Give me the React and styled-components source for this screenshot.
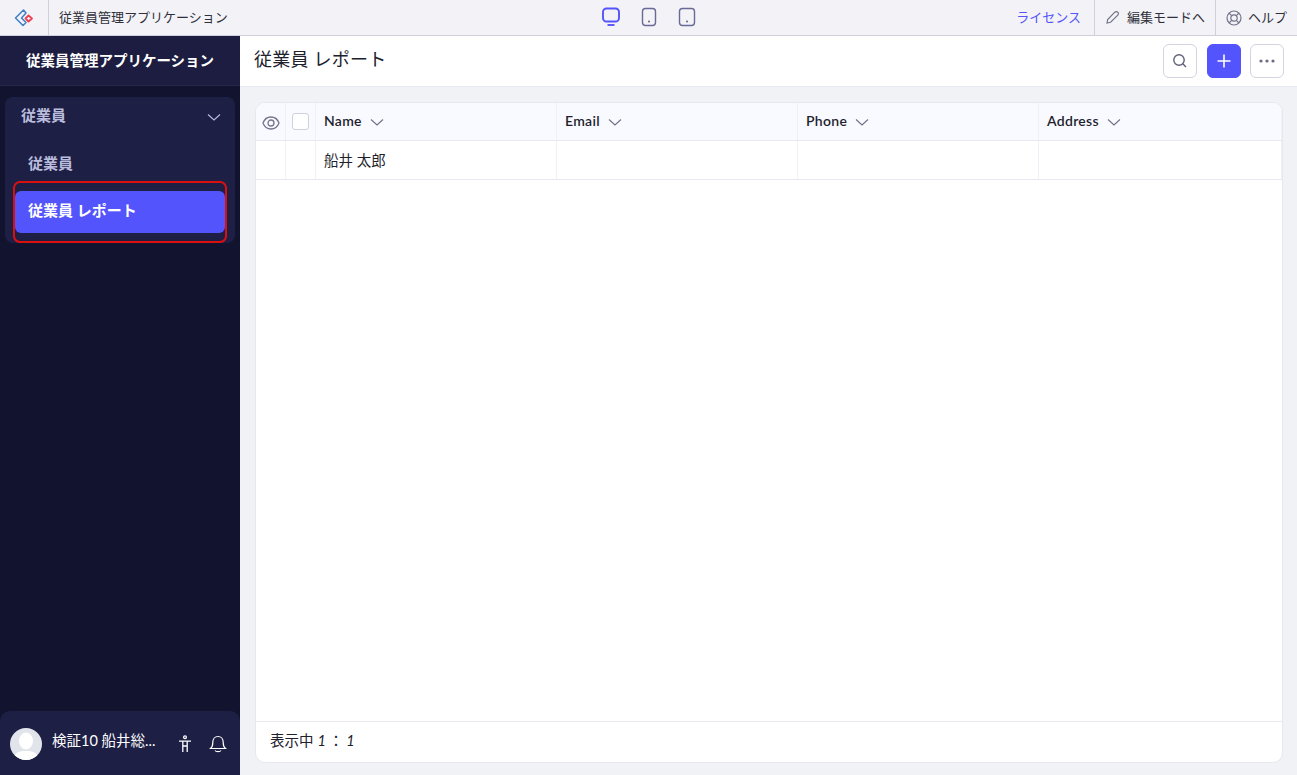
import React from 'react';
import styled, { createGlobalStyle } from 'styled-components';

const GlobalStyle = createGlobalStyle`
    html, body {
        margin: 0;
        height: 100%;
        overflow: hidden;
    }
    body {
        font-family: "Lato", "Noto Sans CJK JP", sans-serif;
        background-color: #f1f2f6;
    }
`;

const Page = styled.div`
    display: flex;
    flex-direction: column;
    width: 1297px;
    height: 775px;
`;

const TopBar = styled.header`
    display: flex;
    align-items: stretch;
    flex: none;
    position: relative;
    height: 35px;
    background-color: #f2f2f7;
    border-bottom: 1px solid #d0d0dc;
`;

const LogoCell = styled.div`
    display: flex;
    align-items: center;
    justify-content: center;
    width: 48px;
    border-right: 1px solid #d0d0dc;
`;

const AppName = styled.div`
    display: flex;
    align-items: center;
    padding: 0 0 3px 10px;
    font-size: 13px;
    color: #2f2f3a;
`;

const DeviceGroup = styled.div`
    position: absolute;
    left: 601px;
    top: 7px;
    display: flex;
    gap: 18px;
`;

const TopRight = styled.div`
    display: flex;
    margin-left: auto;
`;

const TopLink = styled.div`
    display: flex;
    align-items: center;
    gap: ${(p) => p.$gap || 7}px;
    padding: 0 ${(p) => p.$pad || 10}px;
    font-size: 13px;
    color: ${(p) => (p.$accent ? '#5454f8' : '#2f2f3a')};
    border-left: ${(p) => (p.$divider ? '1px solid #d0d0dc' : 'none')};
`;

const TopLabel = styled.span`
    padding-bottom: 3px;
`;

const Body = styled.div`
    display: flex;
    flex: 1;
    min-height: 0;
`;

const Sidebar = styled.aside`
    position: relative;
    display: flex;
    flex-direction: column;
    flex: none;
    width: 240px;
    background-color: #12132f;
`;

const Brand = styled.div`
    display: flex;
    align-items: center;
    justify-content: center;
    flex: none;
    height: 50px;
    padding-bottom: 3px;
    font-size: 14.5px;
    font-weight: 700;
    color: #fff;
    background-color: #1c1d40;
    border-bottom: 1px solid #25264a;
    box-sizing: border-box;
`;

const MenuGroup = styled.nav`
    display: flex;
    flex-direction: column;
    margin: 11px 5px 0;
    height: 146px;
    padding: 0 10px;
    background-color: #1e1f45;
    border-radius: 8px;
`;

const GroupHead = styled.div`
    display: flex;
    align-items: center;
    justify-content: space-between;
    height: 36px;
    padding: 0 4px 0 6px;
    font-size: 15px;
    font-weight: 700;
    color: #b9bcdc;
`;

const GroupLabel = styled.span`
    padding-bottom: 2px;
`;

const ChevronSlot = styled.span`
    display: flex;
    margin-top: 4px;
`;

const MenuItem = styled.div`
    display: flex;
    align-items: center;
    box-sizing: border-box;
    height: 42px;
    margin-top: ${(p) => p.$gap || 0}px;
    padding: 0 0 ${(p) => (p.$active ? 5 : 4)}px 13px;
    font-size: 15px;
    font-weight: 700;
    border-radius: 6px;
    color: ${(p) => (p.$active ? '#fff' : '#b9bcdc')};
    background-color: ${(p) => (p.$active ? '#5454fc' : 'transparent')};
`;

const Highlight = styled.div`
    position: absolute;
    left: 13px;
    top: 145px;
    width: 214px;
    height: 62px;
    box-sizing: border-box;
    border: 2px solid #dc0f0f;
    border-radius: 7px;
    pointer-events: none;
`;

const UserBar = styled.div`
    display: flex;
    align-items: center;
    flex: none;
    height: 64px;
    margin-top: auto;
    padding: 0 13px 0 10px;
    background-color: #1e1f45;
    border-radius: 10px 10px 0 0;
`;

const Avatar = styled.div`
    position: relative;
    overflow: hidden;
    flex: none;
    width: 32px;
    height: 32px;
    margin-top: 2px;
    border-radius: 50%;
    background-color: #e2e4ec;
`;

const UserName = styled.div`
    flex: 1;
    margin-left: 10px;
    padding-bottom: 8px;
    font-size: 14.5px;
    color: #fff;
    white-space: nowrap;
    overflow: hidden;
`;

const UserIcons = styled.div`
    display: flex;
    align-items: center;
    gap: 16px;
    margin-top: 2px;
`;

const Main = styled.main`
    display: flex;
    flex-direction: column;
    flex: 1;
    min-width: 0;
`;

const MainHead = styled.div`
    display: flex;
    align-items: center;
    justify-content: space-between;
    flex: none;
    box-sizing: border-box;
    height: 51px;
    padding: 0 13px 2px 14px;
    background-color: #fff;
    border-bottom: 1px solid #e8e9f0;
`;

const PageTitle = styled.h1`
    margin: 0 0 4px;
    font-size: 18px;
    font-weight: 400;
    letter-spacing: 0.25px;
    color: #20202c;
`;

const Actions = styled.div`
    display: flex;
    gap: 9px;
    margin-top: 1px;
`;

const IconButton = styled.button`
    display: flex;
    align-items: center;
    justify-content: center;
    box-sizing: border-box;
    width: 34px;
    height: 34px;
    padding: 0;
    margin-right: ${(p) => (p.$spaced ? 1 : 0)}px;
    border-radius: 6px;
    border: 1px solid ${(p) => (p.$primary ? '#5454fc' : '#d3d3e2')};
    background-color: ${(p) => (p.$primary ? '#5454fc' : '#fff')};
`;

const Content = styled.div`
    display: flex;
    flex: 1;
    min-height: 0;
    padding: 15px 14px 12px 15px;
`;

const Card = styled.section`
    display: flex;
    flex-direction: column;
    flex: 1;
    box-sizing: border-box;
    overflow: hidden;
    background-color: #fff;
    border: 1px solid #e7e8ef;
    border-radius: 10px;
`;

const Row = styled.div`
    display: grid;
    grid-template-columns: 30px 30px 241px 241px 241px 1fr;
    flex: none;
    box-sizing: border-box;
    height: ${(p) => p.$height}px;
    background-color: ${(p) => (p.$head ? '#f9faff' : '#fff')};
    border-bottom: 1px solid #e8e9f0;
`;

const Cell = styled.div`
    display: flex;
    align-items: center;
    justify-content: ${(p) => (p.$center ? 'center' : 'flex-start')};
    gap: 8px;
    padding-left: ${(p) => (p.$center ? 0 : 8)}px;
    font-size: ${(p) => (p.$head ? 14 : 14.5)}px;
    font-weight: ${(p) => (p.$head ? 600 : 400)};
    letter-spacing: ${(p) => (p.$head ? '0.3px' : '0')};
    color: #1f1f2e;
    border-right: 1px solid #f0f1f6;
`;

const CellText = styled.span`
    padding-bottom: 2px;
`;

const EyeSlot = styled.span`
    display: flex;
    margin-top: 2px;
`;

const Checkbox = styled.span`
    display: block;
    box-sizing: border-box;
    width: 17px;
    height: 17px;
    background-color: #fff;
    border: 1px solid #cfd0e0;
    border-radius: 3px;
`;

const Spacer = styled.div`
    flex: 1;
`;

const Footer = styled.div`
    display: flex;
    align-items: center;
    flex: none;
    box-sizing: border-box;
    height: 41px;
    padding: 0 0 5px 14px;
    font-size: 14.5px;
    color: #20202c;
    border-top: 1px solid #e8e9f0;
`;

const Count = styled.span`
    margin-left: 4px;
    font-style: italic;
    white-space: pre;
`;

const CountColon = styled.span`
    margin: 0 -0.5px;
    font-style: normal;
`;

const Chevron = ({ color = '#6f7086', size = 14 }) => (
    <svg width={size} height={size} viewBox="0 0 14 14" fill="none" stroke={color} strokeWidth="1.1">
        <path d="M1 4.5 L7 10 L13 4.5" />
    </svg>
);

const Logo = () => (
    <svg width="22" height="20" viewBox="0 0 22 20" fill="none">
        <path d="M10.5 2 L2.5 10 L10 17.5 L13 14.5 L8.5 10 L13 5 Z" stroke="#3f80c4" strokeWidth="1.5" strokeLinejoin="round" />
        <path d="M15.5 7.5 L19 10.5 L15.5 13.5 L12.5 10.5 Z" stroke="#ee4050" strokeWidth="1.8" strokeLinejoin="round" />
    </svg>
);

const Desktop = () => (
    <svg width="20" height="20" viewBox="0 0 20 20" fill="none" stroke="#5454fc">
        <rect x="2" y="1.5" width="16" height="13" rx="3.5" strokeWidth="1.9" />
        <path d="M6.5 18 H13.5" strokeWidth="1.9" />
    </svg>
);

const Handheld = ({ wide }) => {
    const x = wide ? 2.5 : 3.5;
    const w = wide ? 15 : 13;
    return (
        <svg width="20" height="20" viewBox="0 0 20 20" fill="none" stroke="#6a6a98">
            <rect x={x} y="1.5" width={w} height="17" rx="3" strokeWidth="1.4" />
            <circle cx="10" cy="14.5" r="0.9" fill="#55556f" stroke="none" />
        </svg>
    );
};

const Pencil = () => (
    <svg width="15" height="15" viewBox="0 0 15 15" fill="none" stroke="#73738a" strokeWidth="1.2">
        <path d="M2 13 L2.7 9.5 L9.8 2.2 C10.8 1.3 12 1.4 12.9 2.2 C13.7 3.1 13.7 4.2 12.8 5.2 L5.6 12.3 Z" />
    </svg>
);

const Lifebuoy = () => (
    <svg width="16" height="16" viewBox="0 0 16 16" fill="none" stroke="#73738a" strokeWidth="1.2">
        <circle cx="8" cy="8" r="7" />
        <circle cx="8" cy="8" r="3.2" />
        <path d="M3 3 L5.7 5.7 M13 3 L10.3 5.7 M3 13 L5.7 10.3 M13 13 L10.3 10.3" />
    </svg>
);

const SearchIcon = () => (
    <svg width="16" height="16" viewBox="0 0 16 16" fill="none" stroke="#5f6078" strokeWidth="1.4">
        <circle cx="7" cy="7" r="5.2" />
        <path d="M10.8 10.8 L14 14" />
    </svg>
);

const PlusIcon = () => (
    <svg width="14" height="14" viewBox="0 0 14 14" stroke="#fff" strokeWidth="1.6">
        <path d="M7 0.5 V13.5 M0.5 7 H13.5" />
    </svg>
);

const DotsIcon = () => (
    <svg width="18" height="6" viewBox="0 0 18 6" fill="#6b6c84">
        <circle cx="3" cy="3" r="1.6" />
        <circle cx="9" cy="3" r="1.6" />
        <circle cx="15" cy="3" r="1.6" />
    </svg>
);

const EyeIcon = () => (
    <svg width="18" height="14" viewBox="0 0 18 14" fill="none" stroke="#74758c" strokeWidth="1.3">
        <path d="M1 7 C2.5 3 5.5 1 9 1 C12.5 1 15.5 3 17 7 C15.5 11 12.5 13 9 13 C5.5 13 2.5 11 1 7 Z" />
        <circle cx="9" cy="7" r="3" />
    </svg>
);

const AccessIcon = () => (
    <svg width="16" height="18" viewBox="0 0 16 18" fill="none" stroke="#fff" strokeWidth="1.3">
        <circle cx="8" cy="2.2" r="1.4" />
        <path d="M2 6.2 H14 M5.8 6.2 V17 M10.2 6.2 V17 M5.8 11 H10.2" />
    </svg>
);

const BellIcon = () => (
    <svg width="18" height="18" viewBox="0 0 18 18" fill="none" stroke="#fff" strokeWidth="1.2">
        <path d="M1.5 13.5 C3.5 12 3.8 10.5 3.8 7.5 C3.8 4 6 1.5 9 1.5 C12 1.5 14.2 4 14.2 7.5 C14.2 10.5 14.5 12 16.5 13.5 Z" />
        <path d="M6 15.5 C7 17 11 17 12 15.5" />
    </svg>
);

const AvatarFigure = () => (
    <svg width="32" height="32" viewBox="0 0 32 32" fill="#fff">
        <ellipse cx="16" cy="13" rx="7" ry="8.5" />
        <path d="M3 32 C4 24 10 23 16 23 C22 23 28 24 29 32 Z" />
    </svg>
);

const columns = ['Name', 'Email', 'Phone', 'Address'];

const App = () => {
    return (
        <Page>
            <GlobalStyle />
            <TopBar>
                <LogoCell><Logo /></LogoCell>
                <AppName>従業員管理アプリケーション</AppName>
                <DeviceGroup>
                    <Desktop />
                    <Handheld />
                    <Handheld wide />
                </DeviceGroup>
                <TopRight>
                    <TopLink $accent $pad={13}><TopLabel>ライセンス</TopLabel></TopLink>
                    <TopLink $divider><Pencil /><TopLabel>編集モードへ</TopLabel></TopLink>
                    <TopLink $divider $gap={6}><Lifebuoy /><TopLabel>ヘルプ</TopLabel></TopLink>
                </TopRight>
            </TopBar>
            <Body>
                <Sidebar>
                    <Brand>従業員管理アプリケーション</Brand>
                    <MenuGroup>
                        <GroupHead>
                            <GroupLabel>従業員</GroupLabel>
                            <ChevronSlot><Chevron color="#b9bcdc" /></ChevronSlot>
                        </GroupHead>
                        <MenuItem $gap={10}>従業員</MenuItem>
                        <MenuItem $gap={6} $active>従業員 レポート</MenuItem>
                    </MenuGroup>
                    <Highlight />
                    <UserBar>
                        <Avatar><AvatarFigure /></Avatar>
                        <UserName>検証10 船井総...</UserName>
                        <UserIcons>
                            <AccessIcon />
                            <BellIcon />
                        </UserIcons>
                    </UserBar>
                </Sidebar>
                <Main>
                    <MainHead>
                        <PageTitle>従業員 レポート</PageTitle>
                        <Actions>
                            <IconButton $spaced><SearchIcon /></IconButton>
                            <IconButton $primary><PlusIcon /></IconButton>
                            <IconButton><DotsIcon /></IconButton>
                        </Actions>
                    </MainHead>
                    <Content>
                        <Card>
                            <Row $head $height={38}>
                                <Cell $center><EyeSlot><EyeIcon /></EyeSlot></Cell>
                                <Cell $center><Checkbox /></Cell>
                                {columns.map((col) => (
                                    <Cell $head key={col}><CellText>{col}</CellText><Chevron /></Cell>
                                ))}
                            </Row>
                            <Row $height={39}>
                                <Cell />
                                <Cell />
                                <Cell><CellText>船井 太郎</CellText></Cell>
                                <Cell />
                                <Cell />
                                <Cell />
                            </Row>
                            <Spacer />
                            <Footer>表示中<Count>1 <CountColon>：</CountColon> 1</Count></Footer>
                        </Card>
                    </Content>
                </Main>
            </Body>
        </Page>
    );
};

export default App;
